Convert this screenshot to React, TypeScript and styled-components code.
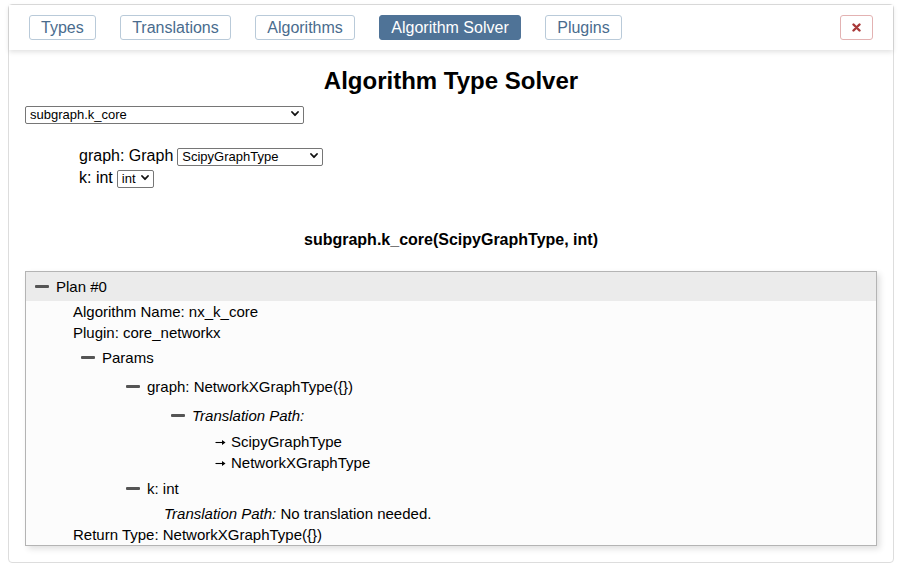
import React, { useState } from 'react';
import styled, { createGlobalStyle } from 'styled-components';

const GlobalStyle = createGlobalStyle`
    html, body {
        margin: 0;
        padding: 0;
        background: #ffffff;
    }
    body {
        font-family: 'Liberation Sans', Arial, Helvetica, sans-serif;
        color: #000;
    }
`;

const Panel = styled.div`
    margin: 4px 8px 0 8px;
    border: 1px solid #dddddd;
    border-radius: 4px;
    background: #fff;
`;

const NavBar = styled.nav`
    display: flex;
    align-items: center;
    gap: 24.5px;
    height: 45px;
    padding: 0 20px;
    box-sizing: border-box;
    background: #fff;
    box-shadow: 0 2px 5px rgba(0, 0, 0, 0.12);
    position: relative;
`;

const NavButton = styled.button<{ $active?: boolean }>`
    height: 25px;
    padding: 0 11px;
    font-family: 'Liberation Sans', Arial, sans-serif;
    font-size: 16px;
    line-height: 23px;
    border-radius: 3px;
    border: 1px solid ${(p) => (p.$active ? '#4f7397' : '#b9cad9')};
    background: ${(p) => (p.$active ? '#4f7397' : '#ffffff')};
    color: ${(p) => (p.$active ? '#ffffff' : '#4a6c8e')};
    cursor: pointer;
`;

const CloseButton = styled.button`
    margin-left: auto;
    width: 33px;
    height: 25px;
    padding: 0;
    display: flex;
    align-items: center;
    justify-content: center;
    background: #fff;
    border: 1px solid #e3b2b2;
    border-radius: 3px;
    cursor: pointer;
`;

const Content = styled.div`
    padding: 0 16px 16px 16px;
`;

const Title = styled.h1`
    margin: 17px 0 0 0;
    font-size: 24px;
    line-height: 28px;
    font-weight: 700;
    text-align: center;
`;

const SelectWrap = styled.span<{ $width: number }>`
    position: relative;
    display: inline-block;
    width: ${(p) => p.$width}px;
    height: 18px;
    vertical-align: middle;
`;

const NativeSelect = styled.select`
    appearance: none;
    -webkit-appearance: none;
    width: 100%;
    height: 18px;
    box-sizing: border-box;
    margin: 0;
    padding: 0 16px 0 4px;
    border: 1px solid #767676;
    border-radius: 2px;
    background: #fff;
    font-family: 'Liberation Sans', Arial, sans-serif;
    font-size: 13px;
    line-height: 16px;
    color: #000;
`;

const Chevron = styled.svg`
    position: absolute;
    right: 5px;
    top: 6px;
    pointer-events: none;
`;

const AlgoRow = styled.div`
    margin-top: 10px;
    display: flex;
`;

const ParamBlock = styled.div`
    margin-top: 24px;
    padding-left: 54px;
    display: flex;
    flex-direction: column;
    gap: 4px;
`;

const ParamRow = styled.div`
    display: flex;
    align-items: center;
    gap: 4px;
    height: 18px;
    font-size: 16px;
`;

const Signature = styled.h3`
    margin: 43px 0 0 0;
    font-size: 16px;
    line-height: 20px;
    font-weight: 700;
    text-align: center;
`;

const PlanBox = styled.div`
    margin-top: 21px;
    border: 1px solid #b4b4b4;
    background: #fcfcfc;
    box-shadow: 3px 3px 6px rgba(0, 0, 0, 0.12);
    font-size: 15px;
`;

const PlanHeader = styled.div`
    display: flex;
    align-items: center;
    gap: 7px;
    height: 29px;
    padding-left: 9px;
    background: #ebebeb;
`;

const PlanBody = styled.div`
    padding-left: 47px;
`;

const Line = styled.div`
    line-height: 21px;
    white-space: nowrap;
`;

const ToggleRow = styled.div`
    display: flex;
    align-items: center;
    gap: 7px;
    height: 29px;
    white-space: nowrap;
`;

const Dash = styled.span`
    display: inline-block;
    width: 14px;
    height: 3px;
    border-radius: 1px;
    background: #555555;
    flex-shrink: 0;
`;

const Children = styled.div<{ $indent: number }>`
    padding-left: ${(p) => p.$indent}px;
`;

const ArrowList = styled.div`
    margin: 1px 0 1px 0;
`;

const PathStep = styled(Line)`
    display: flex;
    align-items: center;
    gap: 5px;
`;

const Arrow = styled.svg`
    flex-shrink: 0;
    margin-top: 1px;
`;

const Em = styled.i`
    font-style: italic;
`;

const Select = ({ width, value, options }: { width: number; value: string; options: string[] }) => (
    <SelectWrap $width={width}>
        <NativeSelect defaultValue={value}>
            {options.map((o) => (
                <option key={o}>{o}</option>
            ))}
        </NativeSelect>
        <Chevron width="8" height="6" viewBox="0 0 8 6">
            <path d="M1 1 L4 4.2 L7 1" fill="none" stroke="#111" strokeWidth="1.8" strokeLinecap="round" strokeLinejoin="round" />
        </Chevron>
    </SelectWrap>
);

const Step = ({ name }: { name: string }) => (
    <PathStep>
        <Arrow width="11" height="7" viewBox="0 0 11 7">
            <path d="M0.5 3.5 H9" stroke="#000" strokeWidth="1.1" />
            <path d="M7 1 L10.5 3.5 L7 6 Z" fill="#000" />
        </Arrow>
        {name}
    </PathStep>
);

const tabs = ['Types', 'Translations', 'Algorithms', 'Algorithm Solver', 'Plugins'];

const App = () => {
    const [active, setActive] = useState('Algorithm Solver');

    return (
        <>
            <GlobalStyle />
            <Panel>
                <NavBar>
                    {tabs.map((t) => (
                        <NavButton key={t} $active={t === active} onClick={() => setActive(t)}>
                            {t}
                        </NavButton>
                    ))}
                    <CloseButton>
                        <svg width="9" height="9" viewBox="0 0 9 9">
                            <path d="M1.5 1.5 L7.5 7.5 M7.5 1.5 L1.5 7.5" stroke="#a83838" strokeWidth="2.4" strokeLinecap="round" />
                        </svg>
                    </CloseButton>
                </NavBar>
                <Content>
                    <Title>Algorithm Type Solver</Title>
                    <AlgoRow>
                        <Select width={279} value="subgraph.k_core" options={['subgraph.k_core']} />
                    </AlgoRow>
                    <ParamBlock>
                        <ParamRow>
                            graph: Graph
                            <Select width={146} value="ScipyGraphType" options={['ScipyGraphType', 'NetworkXGraphType']} />
                        </ParamRow>
                        <ParamRow>
                            k: int
                            <Select width={37} value="int" options={['int']} />
                        </ParamRow>
                    </ParamBlock>
                    <Signature>subgraph.k_core(ScipyGraphType, int)</Signature>
                    <PlanBox>
                        <PlanHeader>
                            <Dash />
                            Plan #0
                        </PlanHeader>
                        <PlanBody>
                            <Line>Algorithm Name: nx_k_core</Line>
                            <Line>Plugin: core_networkx</Line>
                            <Children $indent={8}>
                                <ToggleRow>
                                    <Dash />
                                    Params
                                </ToggleRow>
                                <Children $indent={45}>
                                    <ToggleRow>
                                        <Dash />
                                        graph: NetworkXGraphType({'{}'})
                                    </ToggleRow>
                                    <Children $indent={45}>
                                        <ToggleRow>
                                            <Dash />
                                            <Em>Translation Path:</Em>
                                        </ToggleRow>
                                        <Children $indent={44}>
                                            <ArrowList>
                                                <Step name="ScipyGraphType" />
                                                <Step name="NetworkXGraphType" />
                                            </ArrowList>
                                        </Children>
                                    </Children>
                                    <ToggleRow>
                                        <Dash />
                                        k: int
                                    </ToggleRow>
                                    <Children $indent={38}>
                                        <Line>
                                            <Em>Translation Path:</Em> No translation needed.
                                        </Line>
                                    </Children>
                                </Children>
                            </Children>
                            <Line>Return Type: NetworkXGraphType({'{}'})</Line>
                        </PlanBody>
                    </PlanBox>
                </Content>
            </Panel>
        </>
    );
};

export default App;
